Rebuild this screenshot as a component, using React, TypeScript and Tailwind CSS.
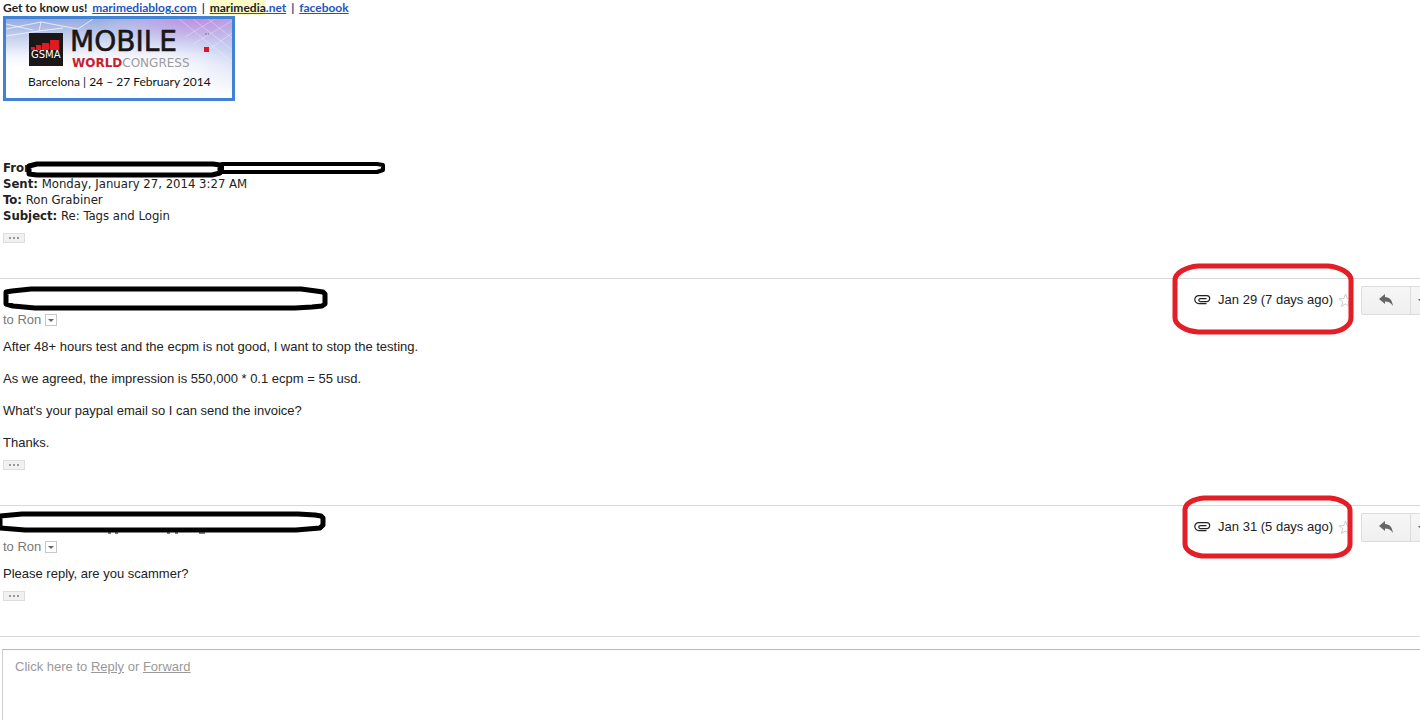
import type { ReactNode } from "react";

function Banner() {
  return (
    <svg width="232" height="85" viewBox="0 0 232 85" className="block" role="img" aria-label="GSMA Mobile World Congress">
      <defs>
        <linearGradient id="sky" x1="0" y1="0" x2="0" y2="1">
          <stop offset="0" stopColor="#8ea4dc" />
          <stop offset="0.2" stopColor="#bcc8eb" />
          <stop offset="0.45" stopColor="#eef1fb" />
          <stop offset="0.6" stopColor="#ffffff" />
        </linearGradient>
        <radialGradient id="glow" cx="0.85" cy="0" r="0.45">
          <stop offset="0" stopColor="#c583dc" stopOpacity="0.9" />
          <stop offset="0.5" stopColor="#c9a9e8" stopOpacity="0.6" />
          <stop offset="1" stopColor="#dcdcf6" stopOpacity="0" />
        </radialGradient>
        <linearGradient id="side" x1="0" y1="0" x2="1" y2="0">
          <stop offset="0.7" stopColor="#b9c3ec" stopOpacity="0" />
          <stop offset="1" stopColor="#a9b8ea" stopOpacity="0.55" />
        </linearGradient>
        <linearGradient id="floor" x1="0" y1="0" x2="0" y2="1">
          <stop offset="0.4" stopColor="#ffffff" stopOpacity="0" />
          <stop offset="0.95" stopColor="#ffffff" />
        </linearGradient>
      </defs>
      <rect width="232" height="85" fill="url(#sky)" />
      <rect width="232" height="85" fill="url(#side)" />
      <rect width="232" height="85" fill="url(#glow)" />
      <rect width="232" height="85" fill="url(#floor)" />
      <g stroke="#ffffff" strokeWidth="1" fill="none">
        <path opacity="0.7" d="M3 13 L38 6 L36 15 L3 20 M38 6 L75 13 L90 3 M36 15 L60 12 M3 8 L30 14" />
        <path opacity="0.3" d="M176 3 L229 46 M190 3 L229 34 M205 3 L229 22 M229 5 L190 28 M229 17 L204 35 M212 3 L182 21" />
      </g>
      <rect x="26" y="17" width="34" height="33" fill="#1a1718" />
      <g fill="#e01a22">
        <rect x="28" y="31" width="4" height="3" />
        <rect x="33" y="29" width="5" height="5" />
        <rect x="39" y="27" width="7" height="7" />
        <rect x="47" y="24" width="9" height="10" />
      </g>
      <text x="28" y="42" fill="#ffffff" fontSize="10" fontFamily="'DejaVu Sans', sans-serif">GSMA</text>
      <text x="67" y="35" fill="#1a1718" stroke="#1a1718" strokeWidth="0.6" fontSize="28" fontFamily="'DejaVu Sans', sans-serif">MOBILE</text>
      <rect x="201" y="31" width="5" height="5" fill="#d8172a" />
      <path d="M202 18h2M205 18h1" stroke="#777777" strokeWidth="1" />
      <text x="69" y="51" fontSize="12" fontFamily="'DejaVu Sans', sans-serif">
        <tspan fill="#c8202f" fontWeight="700">WORLD</tspan>
        <tspan fill="#9b9b9f">CONGRESS</tspan>
      </text>
      <text x="25" y="70" fill="#111111" fontSize="12" fontFamily="Lato, sans-serif">Barcelona | 24 – 27 February 2014</text>
      <rect x="1.5" y="1.5" width="229" height="82" fill="none" stroke="#3f82d6" strokeWidth="3" />
    </svg>
  );
}

function TrimmedButton() {
  return (
    <button aria-label="Show trimmed content" className="flex h-[10px] w-[22px] items-center justify-center gap-[2px] border border-[#dddddd] bg-[#f1f1f1]">
      <span className="size-[2px] bg-[#999999]" />
      <span className="size-[2px] bg-[#999999]" />
      <span className="size-[2px] bg-[#999999]" />
    </button>
  );
}

function PaperclipIcon() {
  return (
    <svg width="17" height="10" viewBox="0 0 17 10" fill="none" stroke="#222222" strokeWidth="1.2" aria-hidden="true">
      <path d="M12.5 8.6H4.8a4 4 0 0 1 0-8H12.7a3 3 0 0 1 0 6H6.3a1.5 1.5 0 0 1 0-3H12.5" />
    </svg>
  );
}

function StarIcon() {
  return (
    <svg width="15" height="15" viewBox="0 0 15 15" fill="#ffffff" stroke="#cccccc" strokeWidth="1" aria-hidden="true">
      <path d="M7.5 1l1.7 4.6 4.9.2-3.9 3 1.4 4.8-4.1-2.8-4.1 2.8 1.4-4.8-3.9-3 4.9-.2z" />
    </svg>
  );
}

type MessageProps = {
  date: string;
  sender: ReactNode;
  ring: ReactNode;
  children: ReactNode;
};

function Message({ date, sender, ring, children }: MessageProps) {
  return (
    <article className="border-t border-[#d8d8d8] pb-[35px]">
      <header className="relative flex h-[60px] justify-between pt-[7px]">
        <div className="pl-[3px] pt-[26px]">
          {sender}
          <div className="flex items-center gap-1 leading-4 text-[#777777]">
            to Ron
            <button aria-label="Show details" className="flex h-3 w-3 items-center justify-center border border-[#c8c8c8] bg-white">
              <svg width="6" height="3" viewBox="0 0 6 3" aria-hidden="true">
                <path d="M0 0h6L3 3z" fill="#666666" />
              </svg>
            </button>
          </div>
        </div>
        <div className="flex">
          <div className="flex h-7 items-center">
            <PaperclipIcon />
            <span className="ml-[7px] text-[#222222]">{date}</span>
            <button aria-label="Star" className="ml-[5px] mr-2">
              <StarIcon />
            </button>
          </div>
          <div className="flex h-[29px] w-[59px] overflow-hidden rounded-l-xs border border-r-0 border-[#dcdcdc] bg-linear-to-b from-[#f6f6f6] to-[#f0f0f0]">
            <button aria-label="Reply" className="flex w-[49px] shrink-0 items-center justify-center border-r border-[#dcdcdc]">
              <svg width="14" height="13" viewBox="0 0 14 13" fill="#666666" aria-hidden="true">
                <path d="M0 5L6 0v3c4.4.2 7.2 3 8 9-2-3.2-4.4-4.500-8-4.500V10z" />
              </svg>
            </button>
            <button aria-label="More" className="flex w-7 shrink-0 items-center pl-[7px]">
              <svg width="7" height="4" viewBox="0 0 7 4" aria-hidden="true">
                <path d="M0 0h7L3.5 4z" fill="#666666" />
              </svg>
            </button>
          </div>
        </div>
        {ring}
      </header>
      <div className="px-[3px] leading-4 text-[#222222]">{children}</div>
    </article>
  );
}

export default function App() {
  return (
    <main className="flex min-h-screen flex-col overflow-hidden bg-white font-['Liberation_Sans',Arial,sans-serif] text-[13px] text-[#222222]">
      <section className="px-[3px]">
        <p className="font-[Lato,sans-serif] text-xs/4 font-bold">
          Get to know us!{" "}
          <a href="#blog" className="ml-[2px] text-[#1f55c0] underline">marimediablog.com</a>
          <span className="mx-[2px] text-[#1f3f80]"> | </span>
          <a href="#site" className="text-[#1f55c0] underline">
            <span className="bg-[#fbfbc8] text-[#222222]">marimedia</span>.net
          </a>
          <span className="mx-[2px] text-[#1f3f80]"> | </span>
          <a href="#facebook" className="text-[#1f55c0] underline">facebook</a>
        </p>
        <Banner />
        <div className="relative mt-[59px] font-['DejaVu_Sans_Condensed','DejaVu_Sans',sans-serif] text-[13px]/4">
          <p><b>From:</b></p>
          <p><b>Sent:</b> Monday, January 27, 2014 3:27 AM</p>
          <p><b>To:</b> Ron Grabiner</p>
          <p><b>Subject:</b> Re: Tags and Login</p>
          <svg className="absolute left-[23px] top-0" width="360" height="20" viewBox="0 0 360 20" fill="#ffffff" stroke="#000000" strokeWidth="4" strokeLinejoin="round" aria-hidden="true">
            <path d="M196 4H351L357 5V10L351 12H196z" />
            <path d="M3 6L11 4H187L194 5V13L186 15H11L3 14z" strokeWidth="5" />
          </svg>
        </div>
        <div className="pb-[35px] pt-[9px]">
          <TrimmedButton />
        </div>
      </section>

      <Message
        date="Jan 29 (7 days ago)"
        sender={
          <svg className="absolute left-[3px] top-[7px]" width="326" height="26" viewBox="0 0 326 26" fill="#ffffff" stroke="#000000" strokeWidth="5" strokeLinejoin="round" aria-hidden="true">
            <path d="M3 6L9 5L28 3H298L313 5L320 6L322 8V18L319 20L309 21L292 22H32L10 20L3 18z" />
          </svg>
        }
        ring={
          <svg className="absolute right-[66px] top-[-16px]" width="182" height="72" viewBox="0 0 182 72" fill="none" stroke="#e31e26" strokeWidth="5" aria-hidden="true">
            <path d="M26 3H156C168 4 179 10 179 17V55C179 62 170 69 158 69H26C14 68 3 62 3 55V17C3 10 14 4 26 3z" />
          </svg>
        }
      >
        <p>After 48+ hours test and the ecpm is not good, I want to stop the testing.</p>
        <p className="mt-4">As we agreed, the impression is 550,000 * 0.1 ecpm = 55 usd.</p>
        <p className="mt-4">What's your paypal email so I can send the invoice?</p>
        <p className="mb-[9px] mt-4">Thanks.</p>
        <TrimmedButton />
      </Message>

      <Message
        date="Jan 31 (5 days ago)"
        sender={
          <svg className="absolute left-0 top-[4px]" width="328" height="26" viewBox="0 0 328 26" fill="#ffffff" stroke="#000000" strokeWidth="5" strokeLinejoin="round" aria-hidden="true">
            <path d="M0 6L22 4H298L315 5L321 6L323 8V15L320 18L296 20H25L0 18z" />
            <path d="M108 23h3M115 23h3M167 23h3M175 23h3M199 23h6" strokeWidth="1" />
          </svg>
        }
        ring={
          <svg className="absolute right-[67px] top-[-11px]" width="171" height="64" viewBox="0 0 171 64" fill="none" stroke="#e31e26" strokeWidth="5" aria-hidden="true">
            <path d="M22 3H148C158 4 168 9 168 15V49C168 56 160 61 150 61H20C11 60 3 55 3 49V15C3 8 12 4 22 3z" />
          </svg>
        }
      >
        <p className="mb-[9px]">Please reply, are you scammer?</p>
        <TrimmedButton />
      </Message>

      <section className="flex flex-1 flex-col border-t border-[#d8d8d8] pl-[2px] pt-3">
        <div className="flex-1 border-l border-t border-l-[#d0d0d0] border-t-[#b8b8b8] px-3 pt-[9px] leading-4 text-[#999999]">
          Click here to <a href="#reply" className="underline">Reply</a> or <a href="#forward" className="underline">Forward</a>
        </div>
      </section>
    </main>
  );
}
